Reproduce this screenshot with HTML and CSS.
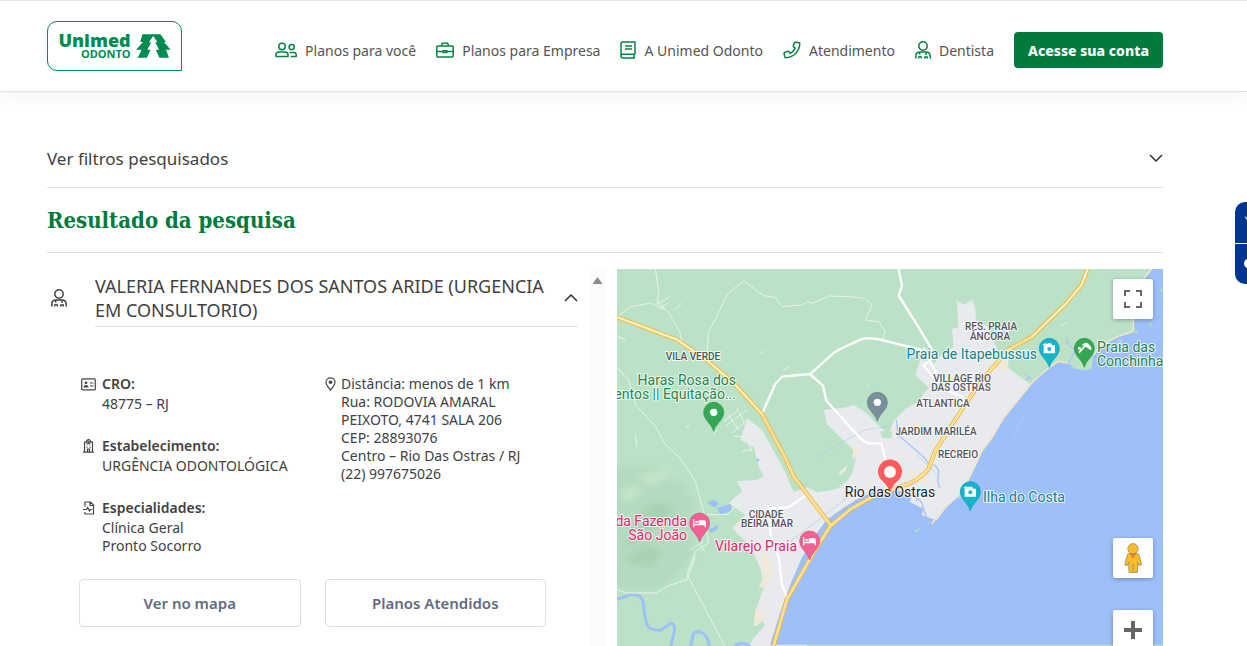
FILE: index.html
```html
<!DOCTYPE html>
<html lang="pt-BR">
<head>
<meta charset="utf-8">
<meta name="viewport" content="width=device-width, initial-scale=1">
<title>Unimed Odonto</title>
<link rel="stylesheet" href="styles.css">
</head>
<body>
<header class="header">
  <a class="logo" href="#">
    <span class="logo-text"><span class="logo-name">Unimed</span><span class="logo-sub">ODONTO</span></span>
    <svg class="logo-tree" viewBox="311 71 106 73" aria-hidden="true">
      <path d="M330 72H385L402 95H396L416 119H402L411 143H382L371 119H381L369 96H376L363 77L350 96H357L345 119H355L344 143H316L328 119H311L332 95H324Z"/>
    </svg>
  </a>
  <nav class="nav">
    <a class="nav-item" href="#">
      <svg class="line-icon" width="22" height="16" viewBox="0 0 22 16"><circle cx="7" cy="4.500" r="3.200"/><path d="M1 14.500v-1.500q0-3 3-3h6q3 0 3 3v1.500z"/><circle cx="16.700" cy="5" r="2.600"/><path d="M14.500 10.500h4.300q2.400 0 2.400 2.400v1.600h-5.500"/></svg>
      Planos para você</a>
    <a class="nav-item" href="#">
      <svg class="line-icon" width="18" height="16" viewBox="0 0 18 16"><rect x=".8" y="4" width="16.400" height="11" rx="1"/><path d="M5.500 4l.8-2.700h5.400l.8 2.700M1 9.500h5.500M11.500 9.500H17M7 8.700h4v1.800H7z"/></svg>
      Planos para Empresa</a>
    <a class="nav-item" href="#">
      <svg class="line-icon" width="16" height="18" viewBox="0 0 16 18"><path d="M15 13.300V1H3Q1 1 1 3v12q0 2 2 2h12M15 13.300H3q-2 0-2 1.800M14 13.500v3.300M5 5h7M5 8h7"/></svg>
      A Unimed Odonto</a>
    <a class="nav-item" href="#">
      <svg class="line-icon" width="18" height="18" viewBox="0 0 18 18"><path d="M12.200 1.200l4 .6q.7.200.6 1Q16.500 8.500 12.500 12.500T2.800 16.800q-.7 0-.9-.7l-.9-3.700q0-.7.600-1l3.300-1.200q.6-.2 1 .3l1.300 1.800q3.500-1.800 5-5.200L10.600 5.800q-.5-.4-.3-1l1.100-3q.2-.6.800-.6z"/></svg>
      Atendimento</a>
    <a class="nav-item" href="#">
      <svg class="line-icon" width="16" height="18" viewBox="0 0 16 18"><circle cx="8" cy="5" r="4.200"/><path d="M.8 17.500v-2.200q0-4.300 4.200-4.300h6q4.200 0 4.200 4.300v2.200M4.700 11v2.500M11 11v3M3.500 17.500q0-2 1.500-2t1.500 2M9.800 17.500v-1.500h2.500v1.500"/></svg>
      Dentista</a>
    <button class="account" type="button">Acesse sua conta</button>
  </nav>
</header>

<main class="main">
  <button class="filters" type="button">Ver filtros pesquisados
    <svg class="chevron" width="14" height="8" viewBox="0 0 14 8"><path d="M1 1l6 6 6-6"/></svg>
  </button>
  <h1 class="title">Resultado da pesquisa</h1>

  <div class="results">
    <section class="list">
      <article class="provider">
        <div class="provider-head">
          <svg class="provider-icon" width="16" height="18" viewBox="0 0 16 18"><circle cx="8" cy="5" r="4.200"/><path d="M.8 17.500v-2.200q0-4.300 4.200-4.300h6q4.200 0 4.200 4.300v2.200M4.700 11v2.500M11 11v3M3.500 17.500q0-2 1.500-2t1.500 2M9.800 17.500v-1.500h2.500v1.500"/></svg>
          <button class="provider-toggle" type="button" aria-expanded="true"><span>VALERIA FERNANDES DOS SANTOS ARIDE (URGENCIA EM CONSULTORIO)</span>
            <svg class="chevron" width="14" height="8" viewBox="0 0 14 8"><path d="M1 7l6-6 6 6"/></svg>
          </button>
        </div>
        <div class="details">
          <dl class="facts">
            <div class="fact">
              <svg class="small-icon" width="15" height="13" viewBox="0 0 15 13"><rect x=".7" y=".9" width="13.600" height="11" rx="1"/><circle class="fill" cx="5" cy="4.800" r="1.400"/><path class="fill" d="M2.500 9.500q0-2.500 2.500-2.500t2.500 2.500z"/><path d="M9 5h3.500M9 8h3.500"/></svg>
              <dt>CRO:</dt><dd>48775 – RJ</dd>
            </div>
            <div class="fact">
              <svg class="small-icon" width="15" height="14" viewBox="0 0 15 14"><path d="M3.500 13V3h2M9.500 3h2v10M2 13.200h11M6.500 13v-3h2v3M5.500 6h1M8.500 6h1M5.500 8.300h1M8.500 8.300h1"/><circle cx="7.500" cy="2.700" r="2"/><path d="M7.500 1.700v2M6.500 2.700h2"/></svg>
              <dt>Estabelecimento:</dt><dd>URGÊNCIA ODONTOLÓGICA</dd>
            </div>
            <div class="fact">
              <svg class="small-icon" width="15" height="14" viewBox="0 0 15 14"><path d="M4 5.500V1h5.500L12.500 4v9H4v-2M9 1v3.500h3.500M2 8.500h3.500l1.200-2 1.800 3.500 1-1.500h1.500"/></svg>
              <dt>Especialidades:</dt><dd>Clínica Geral<br>Pronto Socorro</dd>
            </div>
          </dl>
          <address class="place">
            <svg class="small-icon" width="11" height="14" viewBox="0 0 11 14"><path d="M5.500 13Q1 8 1 5.300a4.500 4.500 0 0 1 9 0Q10 8 5.500 13z"/><circle class="fill" cx="5.500" cy="5.300" r="1.800"/></svg>
            <p>Distância: menos de 1 km<br>Rua: RODOVIA AMARAL PEIXOTO, 4741 SALA 206<br>CEP: 28893076<br>Centro – Rio Das Ostras / RJ<br>(22) 997675026</p>
          </address>
        </div>
        <div class="actions">
          <button class="action" type="button">Ver no mapa</button>
          <button class="action" type="button">Planos Atendidos</button>
        </div>
      </article>
      <div class="track"><span class="track-arrow"></span></div>
    </section>

    <section class="map" aria-label="Mapa">
      <svg class="map-canvas" viewBox="0 1 546 377" preserveAspectRatio="xMidYMin slice">
        <defs>
          <filter id="soft" x="-20%" y="-20%" width="140%" height="140%"><feGaussianBlur stdDeviation="9"/></filter>
          <path id="pin" d="M0 0C-5-22-30-34-30-57a30 30 0 1 1 60 0C30-34 5-22 0 0z"/>
        </defs>
        <g transform="scale(.33333)">
          <rect class="land" width="1640" height="1140"/>
          <g class="hills" filter="url(#soft)">
            <path d="M-40 600L60 590 130 600 190 640 235 700 220 760 240 830 200 900 140 960 60 975-40 960z"/>
            <path class="hills-dark" d="M60 740l50-40 60 10-20 50-60 30-70 60zM20 880l60-50 60 20-40 50z"/>
            <path class="hills-light" d="M10 670l50-20 10 30-50 20zM60 630l80-25 20 20-60 25zM150 790l40-10 10 20-40 10z"/>
          </g>
          <path class="urban" d="M1019 97l20 13 27-15 10 30v30l35 20 33 75 30 50 65 48-35 60-45 60-60 90-10 12-30 50-35 65-50 75-68 35-35-15-85 20-90 50-45 70-45 90-50 170H370l15-25 25-45 35-40-30-40 25-70-10-60-30-65-55-55 40-40-50-35 40-35-15-30 60-5 20-10-15-29-15-60-40-20 20-65 45 35 70 127 25 60 40-15 30 15 60-10 30-25 15-20 15-60-20-20-70-70-10-42 70-8 20-7 35 22 45 45 25 20 15-40 35-35 35-20 35-45-40-35 15-50 40 15 25-30 35-20-5-55 20-5z"/>
          <path class="urban" d="M640 774L510 994 464 1140H500L650 840Z"/>
          <path class="land" d="M790 490h35v20h-30z"/>
          <path class="sand" d="M430 855q30 0 30 35 15 25-15 65l-20 5 15-35zM415 1025l30 5q-5 40-35 45zM665 615l25-25-5 20-15 12zM710 535l20 5-5 20-20 15zM870 594l30 25 35 15-15 15-45-30zM1150 275l25 0-5 40-20-15z"/>
          <path class="sea" d="M1604 3l-25 30-30 80v77l-45 15-50 25-25 32-5 40-20 5-30-5-20-15-30-5-30 20-20 15-30 30-40 50-45 55-35 60-30 40-25 55-20 40-15 40-15 3-30 27-30 40-45-15 5-20-40-20 5-20-25-10-40-10-40 5-62 28-38 25-50 35-40 55-35 60-30 70-30 80-35 110H1640V3z"/>
          <path class="beach" d="M1604 3l-25 30-30 80v77l-45 15-50 25-25 32M1354 285l-30-5-30 20-50 45-40 50-45 55-35 60-30 40-25 55-20 40-15 40M944 768l30-40 30-27"/>
          <path class="isle" d="M1627 62h12v10h-10zM1552 182l12 5-5 10-10-3zM1595 165l10-3v12l-8 3zM895 785l15-5-5 10-15 3zM930 762h12l-5 7z"/>
          <path class="water-line" d="M1189 505l15-35 20-25-25 40-10 25M1220 315l20 15-15 5M1354 290l20-45-20-15-5-20M949 590q20 10 15 30t5 40M900 700l-5-20 20 25 12 40-15 5M838 455l5 45 80 70 20 30"/>
          <path class="stream" d="M0 994l25-8q15-10 35-4 20 5 20 35 5 50 15 60t35 10l30-20q15-5 12 25-15 50-10 60M220 1140l8-40q10-15 28-5 20 10 22 50M350 1140q20-25 50-5"/>
          <path class="thin-blue" d="M600 565l145-80 70-10M520 820l170-130M900 560l60 60"/>
          <path class="sea" d="M270 705l20-10 15 10-10 15zM300 720l40-12 5 20-35 12zM275 785l30-15-5 15-20 10zM415 575l10-5 2 12z"/>
          <g class="trail">
            <path d="M0 147l40-30 60-12 50 22 40 68 5 25M115 3l10 70-5 35M270 250l5-60 20-35 35-75 50-42 60 45 35 5 20 28 60-5 15-10 15 5 50-22 60 2 50 5 20 20-20 45 40 5 20 30-10 30"/>
            <path d="M0 300l35 35 20 75 60 65 30 55 45 40 45 70 25 90 15 95-40 25-25 70 130 245 30 0M235 865l-25 70-60 20-30 20H30L0 965M265 740h65l50-45M250 830l15 25M220 845l40-25"/>
            <path d="M325 475l65-50M320 460l40-30M345 495l40-35M330 435l35 50M360 420l20 40M350 505l55 2M385 500l20 50M375 550l30-5M120 110l40-25M125 120l30-15M120 95l25 30M175 125l20-20-15 15M0 205l25 10M430 255l10-5M500 305l15-8M205 480l12-10M290 500l10-15M55 500l5 35M750 350l10 8M1200 260l30-18M1330 175l20-12"/>
          </g>
          <g class="street">
            <path d="M435 438l40-90 20-22 85-8 55-50q15-15 35-25l60-28q20-8 60 0l120 30 50 30M578 318l40 35 10 45 90 100q20 25 40 28h35l10 40M845 3l10 50-10 30 60 95 50 85-25 20-10 10 60 70 60 25"/>
            <path d="M570 680l-55 38-60 3 5 75 25 70 10 85 15 35M804 560v30M920 240l40 80"/>
          </g>
          <g class="road-edge"><path d="M0 147l180 68 90 62 80 68 85 93 70 132 25 55 110 145"/><path d="M1412 3l-18 47-50 60-100 97-70 38-70 80-60 85-90 140-20 54q-35 40-80 50l-84 30-70 40-60 50-50 80-80 140-42 146"/></g>
          <g class="road-fill"><path d="M0 147l180 68 90 62 80 68 85 93 70 132 25 55 110 145"/><path d="M1412 3l-18 47-50 60-100 97-70 38-70 80-60 85-90 140-20 54q-35 40-80 50l-84 30-70 40-60 50-50 80-80 140-42 146"/></g>
          <path class="road-line" d="M1244 207l-70 38-70 80-60 85-90 140-20 54q-35 40-80 50l-84 30-70 40-60 50-50 80-80 140-42 146M435 438l70 132 25 55 110 145"/>

          <g transform="translate(290 490)"><use class="pin-green" href="#pin"/><circle class="white" cy="-57" r="11"/></g>
          <g transform="translate(781 460)"><use class="pin-gray" href="#pin"/><circle class="white" cy="-57" r="11"/></g>
          <g transform="translate(1297 298)"><use class="pin-teal" href="#pin"/><path class="white" d="M-17-66h8l4-6h10l4 6h8v24h-34zM-20-70h6v-4h3v4h5v3h-5v5h-3v-5h-6z"/><circle class="lens" cy="-55" r="6"/></g>
          <g transform="translate(1402 298)"><use class="pin-green" href="#pin"/><path class="white" d="M-9-66Q4-80 15-68T19-51L10-58 3-62-14-42-18-46-1-65ZM-19-61h8v8h-8z"/></g>
          <g transform="translate(1060 728)"><use class="pin-teal" href="#pin"/><path class="white" d="M-17-66h8l4-6h10l4 6h8v24h-34zM-20-70h6v-4h3v4h5v3h-5v5h-3v-5h-6z"/><circle class="lens" cy="-55" r="6"/></g>
          <g transform="translate(248 822)"><use class="pin-pink" href="#pin"/><path class="white" d="M-20-68h4v14h13v-11h16q6 0 6 6v15h-4v-6h-31v6h-4z"/><circle class="white" cx="-9" cy="-60" r="4"/></g>
          <g transform="translate(578 876)"><use class="pin-pink" href="#pin"/><path class="white" d="M-20-68h4v14h13v-11h16q6 0 6 6v15h-4v-6h-31v6h-4z"/><circle class="white" cx="-9" cy="-60" r="4"/></g>
        </g>
        <g class="area">
          <text x="76" y="92">VILA VERDE</text>
          <text x="374" y="62">RES. PRAIA</text><text x="373" y="72">ÂNCORA</text>
          <text x="345" y="114">VILLAGE RIO</text><text x="344" y="123">DAS OSTRAS</text>
          <text x="326" y="139">ATLANTICA</text><text x="319" y="167">JARDIM MARILÉA</text><text x="341" y="190">RECREIO</text>
          <text x="149" y="250">CIDADE</text><text x="150" y="259">BEIRA MAR</text>
        </g>
        <g class="poi">
          <g class="poi-green"><text class="end" x="119" y="117">Haras Rosa dos</text><text class="end" x="119" y="131">entos || Equitação...</text><text x="480" y="84">Praia das</text><text x="480" y="98">Conchinhas</text></g>
          <g class="poi-teal"><text class="end" x="420" y="91">Praia de Itapebussus</text><text x="366" y="234">Ilha do Costa</text></g>
          <g class="poi-pink"><text class="end" x="70" y="258">da Fazenda</text><text class="end" x="70" y="272">São João</text><text class="end" x="180" y="283">Vilarejo Praia</text></g>
          <text class="town" x="273" y="229">Rio das Ostras</text>
        </g>
        <path class="pin-red" d="M273 224Q271 218 265 212.500A12 12 0 1 1 281 212.500Q275 218 273 224z"/><circle class="white" cx="273" cy="204" r="6"/>
      </svg>
      <button class="map-button fullscreen" type="button" aria-label="Tela cheia"><svg width="18" height="18" viewBox="0 0 18 18"><path d="M0 0h6v2H2v4H0zM12 0h6v6h-2V2h-4zM0 12h2v4h4v2H0zM16 12h2v6h-6v-2h4z"/></svg></button>
      <button class="map-button pegman" type="button" aria-label="Street View"><svg width="18" height="30" viewBox="0 0 54 90"><path class="peg" d="M17 31h20q8 0 9 7l7 27-8 3-4-10-1 31H15l-1-31-4 10-8-3 7-27q1-7 8-7z"/><path class="peg-shade" d="M16 31h22L27 47z"/><circle class="peg" cx="27" cy="17" r="15.500"/><path class="peg-leg" d="M27 62v27"/></svg></button>
      <button class="map-button zoom-in" type="button" aria-label="Aumentar o zoom"><svg width="18" height="18" viewBox="0 0 18 18"><path d="M7 0h4v7h7v4h-7v7H7v-7H0V7h7z"/></svg></button>
    </section>
  </div>
</main>

<aside class="dock">
  <button class="dock-button" type="button" aria-label="Libras"><svg width="12" height="41" viewBox="0 0 12 41"><path d="M9.500 14l3 2v3z"/></svg></button>
  <button class="dock-button" type="button" aria-label="Acessibilidade"><svg width="12" height="40" viewBox="0 0 12 40"><circle cx="14" cy="19.500" r="5"/></svg></button>
</aside>
</body>
</html>
```

FILE: styles.css
```css
* { box-sizing: border-box; }
body {
  margin: 0;
  height: 100vh;
  display: flex;
  flex-direction: column;
  overflow: hidden;
  background: #fff;
  color: #414141;
  font-family: "Noto Sans", sans-serif;
}
button { font: inherit; color: inherit; border: 0; padding: 0; background: none; cursor: pointer; }
svg { display: block; flex: none; }
a { color: inherit; text-decoration: none; }

.header {
  display: flex;
  align-items: center;
  justify-content: space-between;
  height: 92px;
  flex: none;
  padding: 0 84px 0 47px;
  border-top: 1px solid #e9e9e9;
  border-bottom: 1px solid #e2e2e2;
  box-shadow: 0 4px 20px rgba(0, 0, 0, .05);
}
.logo {
  display: flex;
  align-items: center;
  justify-content: center;
  gap: 5px;
  width: 135px;
  height: 50px;
  border: 1px solid #008c50;
  border-radius: 10px 10px 0 10px;
  color: #008c50;
}
.logo-text { display: flex; flex-direction: column; align-items: flex-end; }
.logo-name { font: 800 18px/15px "Open Sans", sans-serif; }
.logo-sub { font: 700 11px/12px "Open Sans", sans-serif; }
.logo-tree { width: 35px; height: 24px; fill: #008c50; }
.nav { display: flex; align-items: center; gap: 20px; padding-top: 8px; }
.nav-item { display: flex; align-items: center; gap: 8px; font-size: 14px; color: #555; white-space: nowrap; }
.line-icon { fill: none; stroke: #078243; stroke-width: 1.500; stroke-linejoin: round; }
.account {
  width: 149px;
  height: 36px;
  border-radius: 4px;
  background: #007a3d;
  color: #fff;
  font-size: 14px;
  font-weight: 800;
  white-space: nowrap;
}

.main { flex: 1; min-height: 0; display: flex; flex-direction: column; padding: 39px 84px 0 47px; }
.filters {
  display: flex;
  align-items: center;
  justify-content: space-between;
  flex: none;
  height: 57px;
  padding-bottom: 2px;
  border-bottom: 1px solid #e1e1e4;
  font-size: 17px;
}
.chevron { fill: none; stroke: #333; stroke-width: 1.500; }
.title {
  flex: none;
  margin: 0;
  height: 65px;
  border-bottom: 1px solid #d9dce6;
  color: #007a3d;
  font: bold 22px/64px "DejaVu Serif Condensed", "DejaVu Serif", serif;
}
.results { flex: 1; min-height: 0; display: grid; grid-template-columns: 558fr 546fr; gap: 12px; padding-top: 16px; }
.list { display: flex; min-height: 0; overflow: hidden; }
.provider { flex: 1; padding: 5px 12px 0 0; }
.provider-head { display: flex; align-items: center; gap: 28px; padding-left: 4px; }
.provider-icon { fill: none; stroke: #444; stroke-width: 1.500; margin-bottom: 5px; }
.provider-toggle {
  flex: 1;
  display: flex;
  align-items: center;
  justify-content: space-between;
  gap: 12px;
  padding-bottom: 4px;
  border-bottom: 1px solid #e0e0e0;
  font-size: 18px;
  line-height: 24px;
  text-align: left;
}
.details { display: flex; padding: 47px 32px 0 34px; font-size: 14px; line-height: 18px; }
.facts { flex: none; width: 244px; margin: 0; display: flex; flex-direction: column; gap: 23px; }
.fact { display: grid; grid-template-columns: 15px 1fr; column-gap: 6px; align-items: center; }
.fact dt { line-height: 20px; font-weight: 600; }
.fact dd { grid-column: 2; margin: 0; line-height: 18px; padding-top: 1px; }
.small-icon { fill: none; stroke: #444; stroke-width: 1.200; }
.small-icon .fill { fill: #444; stroke: none; }
.place { display: flex; gap: 5px; padding-top: 1px; font-style: normal; }
.place .small-icon { margin-top: 2px; }
.place p { margin: 0; max-width: 184px; }
.actions { display: grid; grid-template-columns: 1fr 1fr; gap: 24px; padding: 24px 32px 0; }
.action { height: 48px; border: 1px solid #dcdfea; border-radius: 4px; color: #5f6b7f; font-size: 15px; font-weight: 600; }
.track { flex: none; width: 15px; background: #fbfbfb; display: flex; justify-content: center; padding-top: 8px; }
.track-arrow { width: 10px; height: 7px; background: #8b8b8b; clip-path: polygon(50% 0, 100% 100%, 0 100%); }

.map { position: relative; min-height: 0; overflow: hidden; background: #9dc0fa; }
.map-canvas { width: 100%; height: 100%; font-family: Roboto, sans-serif; }
.map-button {
  position: absolute;
  right: 10px;
  width: 40px;
  height: 40px;
  display: grid;
  place-items: center;
  border-radius: 2px;
  background: #fff;
  box-shadow: 0 1px 4px rgba(0, 0, 0, .3);
  fill: #666;
}
.fullscreen { top: 10px; }
.pegman { top: 269px; }
.zoom-in { top: 341px; }
.peg { fill: #fbbc2c; stroke: #857b5c; stroke-width: 2; }
.peg-shade { fill: #e5812a; }
.peg-leg { stroke: #857b5c; stroke-width: 2; }

.land { fill: #bbe2c6; }
.hills { fill: #b4dbbf; }
.hills-dark { fill: #a9d1b4; }
.hills-light { fill: #c8e5c9; }
.urban { fill: #e8eaed; }
.sand { fill: #f0e9d8; }
.sea { fill: #9dc0fa; }
.isle { fill: #a8dcc0; }
.beach { fill: none; stroke: #f3e4c3; stroke-width: 5; }
.water-line { fill: none; stroke: #a5c5f5; stroke-width: 4; }
.stream { fill: none; stroke: #9dc0fa; stroke-width: 9; }
.thin-blue { fill: none; stroke: #b1cbee; stroke-width: 2; }
.trail { fill: none; stroke: #e6f4e9; stroke-width: 3; }
.street { fill: none; stroke: #fff; stroke-width: 7; stroke-linejoin: round; }
.road-edge { fill: none; stroke: #f2b740; stroke-width: 13; stroke-linejoin: round; }
.road-fill { fill: none; stroke: #fff0be; stroke-width: 7; stroke-linejoin: round; }
.road-line { fill: none; stroke: #f4c761; stroke-width: 2; stroke-linejoin: round; }
.pin-green { fill: #34a853; stroke: #2a8c44; stroke-width: 2; }
.pin-gray { fill: #78909c; stroke: #647b86; stroke-width: 2; }
.pin-teal { fill: #12b5cb; stroke: #0f96a9; stroke-width: 2; }
.pin-pink { fill: #f06292; stroke: #d84a7c; stroke-width: 2; }
.pin-red { fill: #fb5b5b; }
.white { fill: #fff; }
.lens { fill: #12b5cb; }
.map-canvas text { stroke: #fff; stroke-opacity: .8; stroke-width: 2px; stroke-linejoin: round; paint-order: stroke; }
.area { fill: #50555a; font-size: 10px; font-weight: 500; text-anchor: middle; }
.poi { font-size: 14px; }
.end { text-anchor: end; }
.poi-green { fill: #1d8648; }
.poi-teal { fill: #12808f; }
.poi-pink { fill: #e0246c; }
.town { fill: #202124; text-anchor: middle; }

.dock { position: fixed; top: 202px; right: 0; width: 12px; display: flex; flex-direction: column; gap: 1px; border-radius: 10px 0 0 10px; overflow: hidden; }
.dock-button { background: #003591; fill: #fff; }
```
